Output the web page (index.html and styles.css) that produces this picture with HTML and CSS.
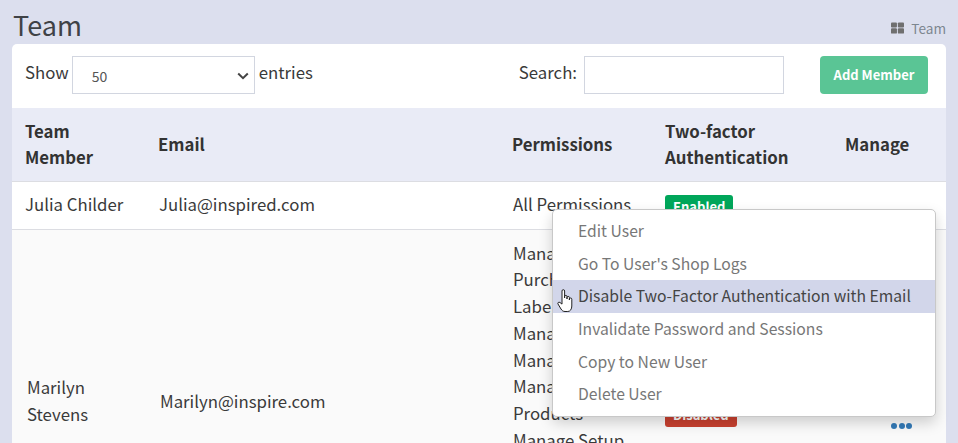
FILE: index.html
```html
<!DOCTYPE html>
<html lang="en">
<head>
<meta charset="utf-8">
<title>Team</title>
<link rel="stylesheet" href="styles.css">
</head>
<body>
<header class="page-head">
  <h1 class="page-title">Team</h1>
  <div class="crumb">
    <svg class="crumb-icon" viewBox="0 0 14 12" aria-hidden="true"><rect x="0" y="0" width="6.4" height="5.4" rx="1"/><rect x="7.4" y="0" width="6.6" height="5.4" rx="1"/><rect x="0" y="6.4" width="6.4" height="5.6" rx="1"/><rect x="7.4" y="6.4" width="6.6" height="5.6" rx="1"/></svg>
    <span>Team</span>
  </div>
</header>
<main class="card">
  <div class="toolbar">
    <label class="length">Show
      <span class="select-wrap">
        <select class="select"><option>50</option></select>
        <svg class="chevron" viewBox="0 0 12 8" aria-hidden="true"><path d="M1.2 1.5 6 6.2l4.8-4.7"/></svg>
      </span>
      entries</label>
    <label class="search">Search: <input class="search-input" type="text"></label>
    <button class="add-btn">Add Member</button>
  </div>
  <table class="team-table">
    <colgroup><col class="c1"><col class="c2"><col class="c3"><col class="c4"><col class="c5"></colgroup>
    <thead>
      <tr><th>Team<br>Member</th><th>Email</th><th>Permissions</th><th>Two-factor<br>Authentication</th><th>Manage</th></tr>
    </thead>
    <tbody>
      <tr class="row-one">
        <td>Julia Childer</td>
        <td>Julia@inspired.com</td>
        <td>All Permissions</td>
        <td class="badge-cell"><span class="badge enabled">Enabled</span></td>
        <td></td>
      </tr>
      <tr class="row-two">
        <td class="name-cell">Marilyn<br>Stevens</td>
        <td class="email-cell">Marilyn@inspire.com</td>
        <td class="perms">Manage Users<br>Purchase Labels<br>Label Settings<br>Manage Orders<br>Manage Returns<br>Manage Stores<br>Products<br>Manage Setup<br>Manage Billing<br>Manage Reports<br>Manage Carriers<br>Manage Rates</td>
        <td class="disabled-cell"><span class="badge disabled">Disabled</span></td>
        <td class="dots-cell"><span class="dots"><i></i><i></i><i></i></span></td>
      </tr>
    </tbody>
  </table>
  <ul class="menu">
    <li>Edit User</li>
    <li>Go To User's Shop Logs</li>
    <li class="active">Disable Two-Factor Authentication with Email
      <svg class="hand" viewBox="0 0 17 23" aria-hidden="true"><path d="M5 2a1.3 1.3 0 0 1 2.6 0v7V7.6a1.2 1.2 0 0 1 2.4 0V10V8.6a1.2 1.2 0 0 1 2.4 0V11v-.8a1.2 1.2 0 0 1 2.4 0V17c0 3-1.5 5.5-4 5.5H8c-2 0-3-1-4-2.5l-3-5c-.8-1.2.8-2.4 2-1.5l2 1.6Z"/></svg>
    </li>
    <li>Invalidate Password and Sessions</li>
    <li>Copy to New User</li>
    <li>Delete User</li>
  </ul>
</main>
</body>
</html>
```
FILE: styles.css
```css
* { box-sizing: border-box; }
html, body { height: 100%; }
body {
  margin: 0;
  height: 443px;
  overflow: hidden;
  padding: 0 12px;
  background: #dcdfee;
  color: #3a3a3a;
  font-family: "Noto Sans CJK JP", "Source Sans Pro", "Noto Sans", sans-serif;
  font-size: 16.8px;
  line-height: 26.8px;
}
.page-head {
  height: 44px;
  display: flex;
  justify-content: space-between;
  align-items: flex-end;
}
.page-title {
  margin: 0 0 -1px 1px;
  font-size: 27px;
  font-weight: 400;
  line-height: 40px;
  color: #3f4246;
}
.crumb {
  display: flex;
  align-items: center;
  gap: 7px;
  font-size: 13.6px;
  line-height: 20px;
  color: #7d8690;
  margin-bottom: 6px;
}
.crumb-icon { width: 13px; height: 12px; fill: #6f6f6f; }
.card {
  position: relative;
  height: 560px;
  background: #fff;
  border-radius: 5px 5px 0 0;
}
.toolbar {
  height: 64px;
  padding: 12px 18px 14px 13px;
  display: flex;
  align-items: center;
}
.length { display: flex; align-items: center; gap: 3px; margin-top: -5px; }
.select-wrap { position: relative; display: block; margin-top: 5px; margin-right: 1px; }
.select {
  display: block;
  appearance: none;
  width: 183px;
  height: 38px;
  padding: 2px 0 0 19px;
  border: 1px solid #d2d6e0;
  border-radius: 0;
  background: #fff;
  color: #555;
  font: inherit;
  font-size: 14px;
}
.chevron {
  position: absolute;
  right: 6px;
  top: 16px;
  width: 12px;
  height: 8px;
  fill: none;
  stroke: #444;
  stroke-width: 2;
}
.search { margin-left: auto; display: flex; align-items: center; gap: 7px; margin-top: -5px; }
.search-input {
  width: 200px;
  height: 38px;
  margin-top: 5px;
  border: 1px solid #d2d6e0;
  background: #fff;
}
.add-btn {
  width: 108px;
  height: 38px;
  margin-left: 36px;
  border: 0;
  border-radius: 4px;
  background: #5ac595;
  color: #fff;
  font: inherit;
  font-size: 13px;
  font-weight: 700;
}
.team-table { width: 934px; border-collapse: collapse; table-layout: fixed; }
.c1 { width: 133px; }
.c2 { width: 354px; }
.c3 { width: 153px; }
.c4 { width: 180px; }
.c5 { width: 114px; }
thead tr { background: #e9ebf6; }
th {
  height: 73px;
  padding: 10px 13px;
  text-align: left;
  font-weight: 700;
  line-height: 26px;
  color: #333;
  border-bottom: 1px solid #dcdde2;
}
td { padding: 10px 14px; vertical-align: middle; border-bottom: 1px solid #dcdde2; white-space: nowrap; }
.row-one td { height: 48px; padding: 8px 13px 10px 14px; }
.row-one td:first-child { padding-left: 13px; }
.row-two { background: #fafafa; }
.row-two td { padding-left: 15px; }
.row-two td.name-cell { padding-top: 12px; }
.row-two td.email-cell { padding-top: 12px; }
.row-two td.perms { padding: 10px 14px; }
.row-one td.badge-cell { padding: 10px 13px 0; vertical-align: top; }
.row-two td.disabled-cell { padding-top: 36px; padding-left: 13px; }
.row-two td.dots-cell { padding-top: 62px; padding-left: 59px; }
.badge {
  display: inline-block;
  height: 24px;
  padding: 0 8px;
  border-radius: 3px;
  color: #fff;
  font-size: 13px;
  font-weight: 700;
  line-height: 24px;
}
.enabled { background: #00a65a; }
.disabled { background: #c9402f; }
.dots { display: flex; gap: 1.5px; }
.dots i { width: 6px; height: 6px; border-radius: 50%; background: #337ab7; }
.menu {
  position: absolute;
  left: 540px;
  top: 165px;
  width: 383.5px;
  height: 208px;
  margin: 0;
  padding: 5.2px 0 0;
  list-style: none;
  background: #fff;
  border: 1px solid #c8c8c8;
  border-radius: 5px;
  box-shadow: 0 6px 14px rgba(0, 0, 0, .175);
  color: #777;
  font-size: 15.7px;
}
.menu li {
  position: relative;
  height: 32.6px;
  padding-left: 25px;
  line-height: 32.6px;
  white-space: nowrap;
}
.menu li.active { background: #d2d6ea; color: #444; }
.hand {
  position: absolute;
  left: 4px;
  top: 9px;
  width: 17px;
  height: 23px;
  fill: #fff;
  stroke: #222;
  stroke-width: 1;
}
```
